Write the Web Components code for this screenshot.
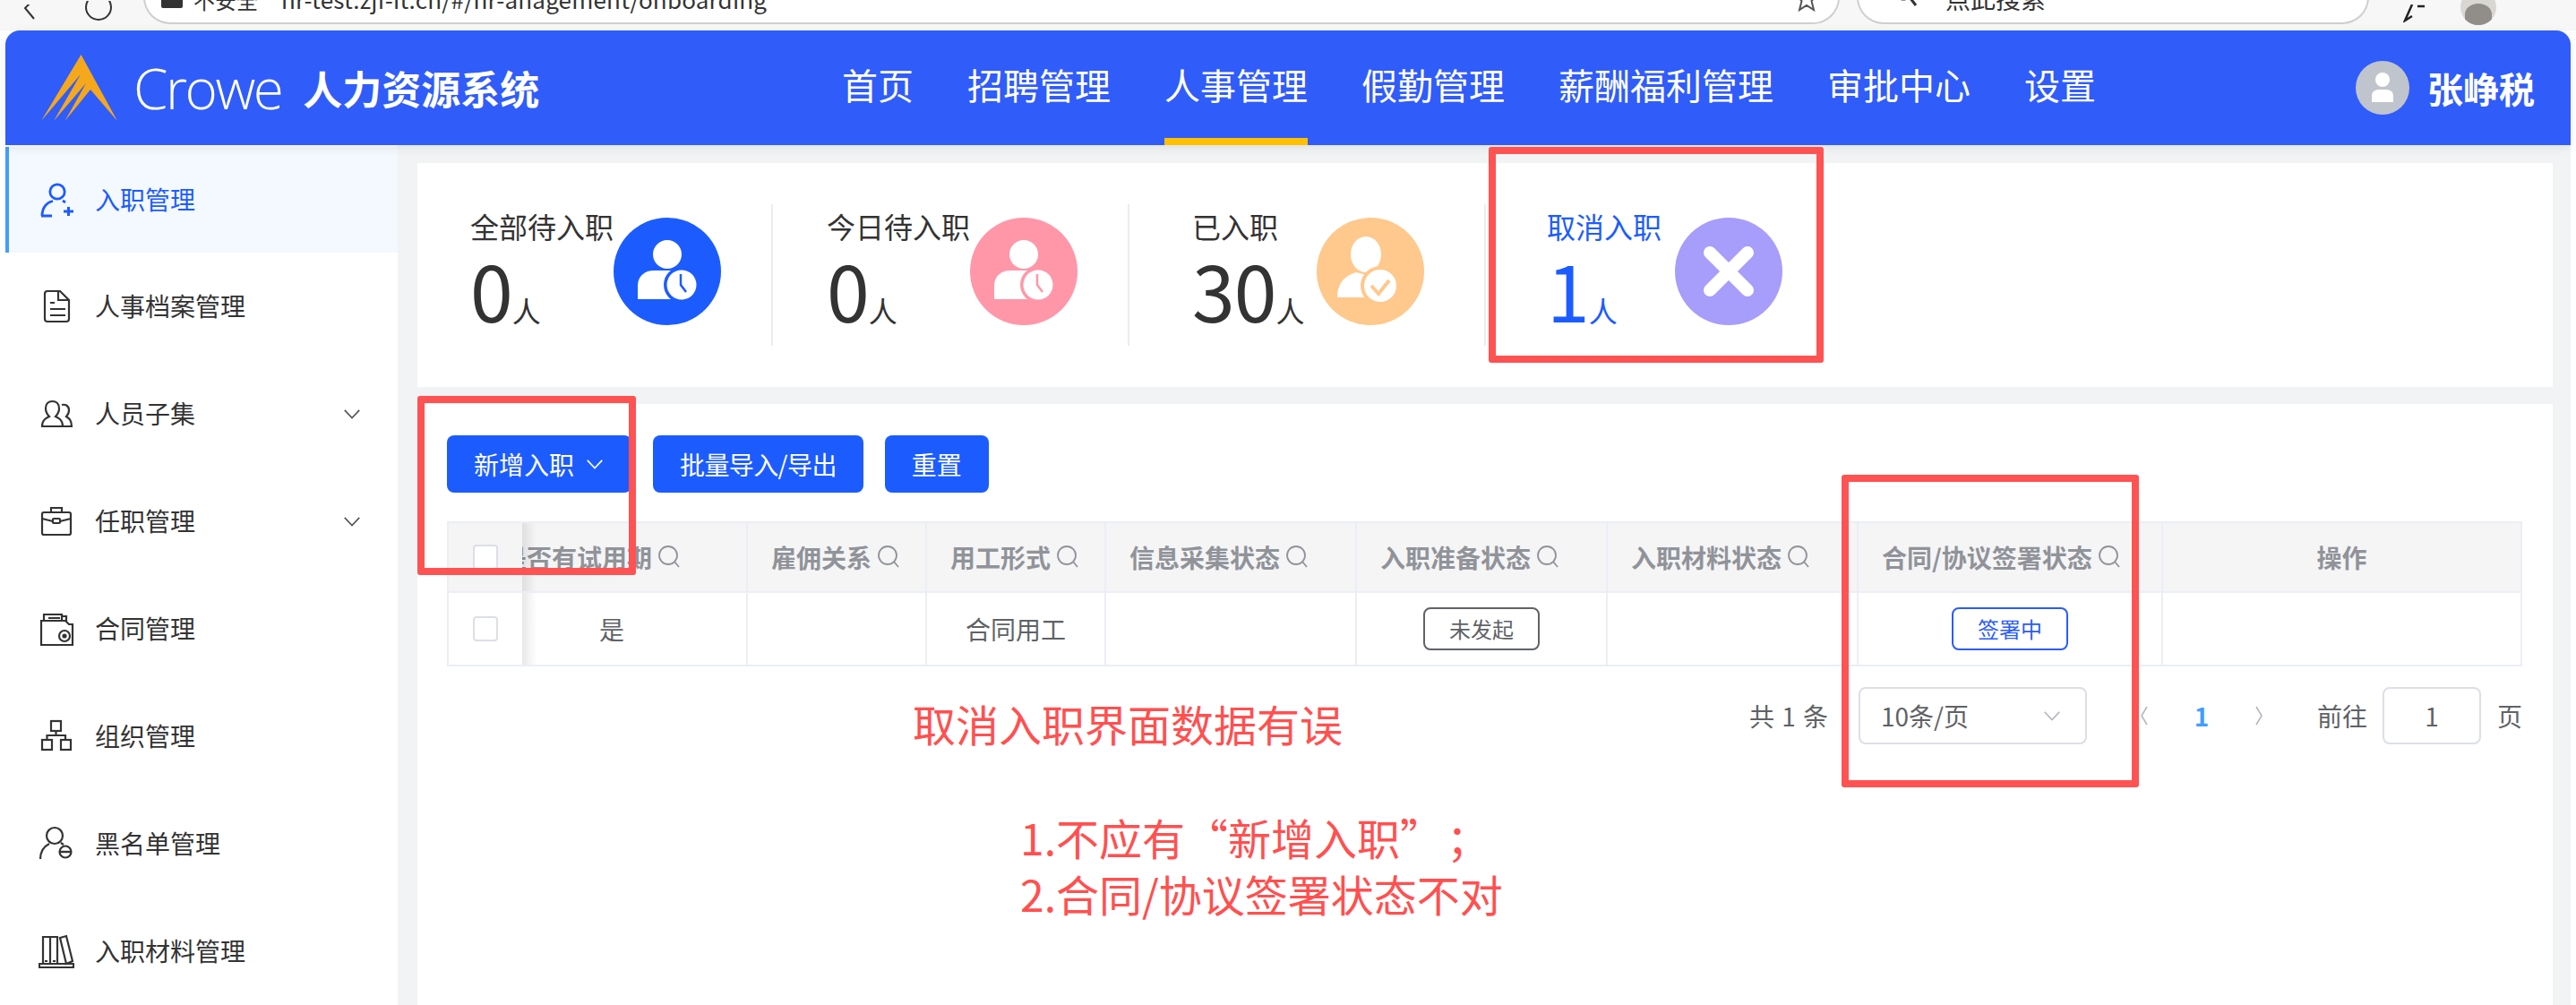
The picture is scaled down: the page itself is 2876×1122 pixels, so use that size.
<!DOCTYPE html>
<html lang="zh-CN">
<head>
<meta charset="utf-8">
<title>人力资源系统</title>
<style>
    html, body { margin: 0; padding: 0; background: #fff; }
    body { width: 2876px; height: 1122px; overflow: hidden; position: relative; font-family: "Noto Sans CJK SC", "Noto Sans", sans-serif; }
    .app-body { display: flex; height: 960px; margin: 0 6px; }
</style>
</head>
<body>
<browser-bar></browser-bar>
<app-header></app-header>
<div class="app-body">
    <side-menu></side-menu>
    <main-area></main-area>
</div>

<!-- 赤枠と赤字の注釈 -->
<red-box style="left:1662px;top:164px;width:374px;height:241px"></red-box>
<red-box style="left:466px;top:442px;width:244px;height:200px"></red-box>
<red-box style="left:2056px;top:530px;width:332px;height:349px"></red-box>
<red-note style="left:1019px;top:776px">取消入职界面数据有误</red-note>
<red-note style="left:1139px;top:903px">1.不应有“新增入职<span style="letter-spacing:28px">”</span>；<br>2.合同/协议签署状态不对</red-note>

<script>
const FONT = '"Noto Sans CJK SC", "Noto Sans", sans-serif';

const chevron = (size, color) => `<svg width="${size}" height="${size}" viewBox="0 0 24 24" fill="none" stroke="${color}" stroke-width="1.8"><path d="M3 7.5 12 17l9-9.5"/></svg>`;

// サイドメニューのアイコン (40x40)
const MENU_ICONS = {
    add: `<circle cx="21" cy="11" r="8.2"/><path d="M4 38c0-9 5-15 12-16.500M15 38H3M27 21l3 2" /><path d="M28 33h11M33.500 28v10" stroke-width="3"/>`,
    doc: `<path d="M12 4h14l10 10v21a3 3 0 0 1-3 3H12a3 3 0 0 1-3-3V7a3 3 0 0 1 3-3Z" transform="translate(-2 -1)"/><path d="M24 3v11h11M15 17h5M15 24h17M15 31h17" transform="translate(-2 -1)"/>`,
    group: `<path d="M4 34c0-7 4-9 8-11-3-3-4-6-4-9 0-5 3-8 7.500-8s7.500 3 7.500 8c0 3-1 6-4 9 4 2 8 4 8 11ZM26 10c4-1 8 1 8 6 0 3-1 5-3 7 3 2 6 4 6 11h-9"/>`,
    bag: `<rect x="4" y="10" width="32" height="25" rx="2"/><path d="M14 10V5h12v5M4 17l12 3M36 17l-12 3"/><rect x="16" y="17" width="8" height="5" rx="1"/>`,
    folder: `<path d="M3 11h27l4 4h4v23H3ZM6 11V4h20v7M11 8h13M27 6h4v6"/><circle cx="29" cy="28" r="6"/><circle cx="29" cy="28" r="1.500" fill="currentColor"/>`,
    org: `<rect x="14" y="3" width="11" height="11"/><rect x="4" y="24" width="11" height="11"/><rect x="25" y="24" width="11" height="11"/><path d="M19.500 14v5M9.500 24v-5h20.500v5"/>`,
    ban: `<circle cx="18" cy="11" r="9"/><path d="M2 37c0-9 4-14 10-17M25 19l3 2"/><circle cx="30" cy="29" r="6.500"/><path d="M23.500 29h13" stroke-width="2.400"/>`,
    books: `<path d="M6 4h8v30H6ZM14 4h8v30h-8ZM25 5l7-2 7 28-7 3Z" transform="translate(-1 0)"/><path d="M1 34h38v4H1ZM7 31h3M16 31h3"/>`
};

class BrowserBar extends HTMLElement {
    constructor() {
        super();
        this.attachShadow({ mode: 'open' });
        this.shadowRoot.innerHTML = `
            <style>
                :host { display: flex; align-items: flex-end; height: 34px; background: #f7f7f7; overflow: hidden; padding: 0 0 7px 26px; box-sizing: border-box; color: #333; font: 26px ${FONT}; }
                svg { flex: none; }
                .nav { display: flex; align-items: flex-end; gap: 55px; width: 134px; margin-bottom: 2px; flex: none; }
                .pill { height: 50px; box-sizing: border-box; background: #fff; border: 2px solid #cfcfcf; border-top: 0; border-radius: 0 0 30px 30px; display: flex; align-items: flex-end; white-space: nowrap; flex: none; }
                .addr { width: 1894px; padding: 0 0 13px 18px; }
                .lock { width: 24px; height: 12px; background: #333; border-radius: 2px; margin-bottom: 3px; }
                .warn { font-size: 24px; line-height: 24px; margin: 0 26px 0 12px; }
                .url { line-height: 26px; letter-spacing: .2px; }
                .star { margin-left: auto; margin-right: 22px; margin-bottom: -2px; }
                .search { width: 572px; margin-left: 19px; padding: 0 0 13px 42px; font-size: 28px; }
                .search svg { margin-right: 31px; margin-bottom: 0; }
                .search span { line-height: 28px; }
                .ext { margin-left: 38px; margin-bottom: 2px; }
                .me { width: 40px; height: 40px; border-radius: 50%; background: #d9d7d3; margin: 0 0 -1px 38px; overflow: hidden; display: flex; justify-content: center; align-items: flex-end; flex: none; }
                .me i { display: block; width: 30px; height: 24px; border-radius: 50% 50% 0 0; background: #918d88; }
            </style>
            <div class="nav">
                <svg width="14" height="20" viewBox="0 0 14 20" fill="none" stroke="#333" stroke-width="2"><path d="M12 -6 2 4l10 12"/></svg>
                <svg width="30" height="24" viewBox="0 0 30 24" fill="none" stroke="#333" stroke-width="2"><circle cx="15" cy="7" r="14"/></svg>
            </div>
            <div class="pill addr">
                <span class="lock"></span><span class="warn">不安全</span>
                <span class="url">hr-test.zjf-it.cn/#/hr-anagement/onboarding</span>
                <svg class="star" width="26" height="26" viewBox="0 0 26 26" fill="none" stroke="#555" stroke-width="2"><path d="M13 -4 17 6h8l-6.500 7 2.500 10-8-5-8 5 2.500-10L1 6h8Z"/></svg>
            </div>
            <div class="pill search">
                <svg width="24" height="24" viewBox="0 0 24 24" fill="none" stroke="#333" stroke-width="3"><circle cx="8" cy="2" r="9"/><path d="m15 9 7 9"/></svg>
                <span>点此搜索</span>
            </div>
            <svg class="ext" width="26" height="20" viewBox="0 0 26 20" fill="none" stroke="#222" stroke-width="2.500"><path d="M10 0 2 18l8-5M16 2h8"/></svg>
            <div class="me"><i></i></div>
        `;
    }
}

class AppHeader extends HTMLElement {
    constructor() {
        super();
        this.attachShadow({ mode: 'open' });
        const items = ['首页', '招聘管理', '人事管理', '假勤管理', '薪酬福利管理', '审批中心', '设置'];
        this.shadowRoot.innerHTML = `
            <style>
                :host { display: flex; position: relative; z-index: 1; height: 128px; margin: 0 6px; background: #305cfa; border-radius: 16px 16px 0 0; color: #fff; font-family: ${FONT}; box-shadow: 0 3px 12px rgba(0, 0, 0, .08); }
                .brand { width: 934px; flex: none; display: flex; align-items: center; padding-left: 40px; box-sizing: border-box; }
                .crowe { font: 300 62px/1 "Open Sans", sans-serif; letter-spacing: -2.5px; margin-left: 18px; }
                .title { font-size: 44px; line-height: 1; font-weight: 700; margin-left: 24px; letter-spacing: 0; }
                nav { display: flex; gap: 60px; }
                nav a { font-size: 40px; line-height: 120px; height: 120px; border-bottom: 8px solid transparent; white-space: nowrap; }
                nav a.active { border-bottom-color: #ffc000; }
                .user { margin-left: auto; padding-right: 40px; display: flex; align-items: center; gap: 20px; font-size: 40px; font-weight: 700; }
                .avatar { width: 60px; height: 60px; border-radius: 50%; background: #c0c4cc; display: flex; align-items: center; justify-content: center; }
            </style>
            <div class="brand">
                <svg width="85" height="74" viewBox="46 61 85 74"><path fill="#f5a81c" d="M90.500 61 131 135 101 100 72.500 135 96 93 60 135 90 83 46 135Z"/></svg>
                <span class="crowe">Crowe</span>
                <span class="title">人力资源系统</span>
            </div>
            <nav>${items.map(t => `<a class="${t === '人事管理' ? 'active' : ''}">${t}</a>`).join('')}</nav>
            <div class="user">
                <span class="avatar"><svg width="30" height="34" viewBox="0 0 30 34" fill="#fff"><ellipse cx="15" cy="8" rx="8" ry="8"/><path d="M3 33V26c0-5 4-7 8-7h8c4 0 8 2 8 7v7Z"/></svg></span>
                <span>张峥税</span>
            </div>
        `;
    }
}

class MenuItem extends HTMLElement {
    constructor() {
        super();
        this.attachShadow({ mode: 'open' });
    }
    connectedCallback() {
        const active = this.hasAttribute('active');
        const arrow = this.hasAttribute('arrow');
        this.shadowRoot.innerHTML = `
            <style>
                :host { display: flex; align-items: center; height: 120px; padding-left: 37px; box-sizing: border-box; color: #333; font: 28px/1 ${FONT}; }
                :host([active]) { height: 118px; margin-top: 2px; background: #f4f8ff; color: #1c5cff; border-left: 4px solid #409eff; padding-left: 33px; }
                svg.icon { flex: none; width: 40px; height: 40px; fill: none; stroke: currentColor; stroke-width: 2.200; margin-right: 23px; }
                :host([active]) svg.icon { stroke-width: 2.800; }
                .label { padding-bottom: 3px; }
                .arrow { margin-left: auto; margin-right: 40px; display: flex; }
            </style>
            <svg class="icon" viewBox="0 0 40 40">${MENU_ICONS[this.getAttribute('icon')]}</svg>
            <span class="label"><slot></slot></span>
            ${arrow ? `<span class="arrow">${chevron(22, '#555')}</span>` : ''}
        `;
    }
}

class SideMenu extends HTMLElement {
    constructor() {
        super();
        this.attachShadow({ mode: 'open' });
        this.shadowRoot.innerHTML = `
            <style>
                :host { display: block; flex: none; width: 438px; background: #fff; overflow: hidden; }
            </style>
            <menu-item icon="add" active>入职管理</menu-item>
            <menu-item icon="doc">人事档案管理</menu-item>
            <menu-item icon="group" arrow>人员子集</menu-item>
            <menu-item icon="bag" arrow>任职管理</menu-item>
            <menu-item icon="folder">合同管理</menu-item>
            <menu-item icon="org">组织管理</menu-item>
            <menu-item icon="ban">黑名单管理</menu-item>
            <menu-item icon="books">入职材料管理</menu-item>
        `;
    }
}

// 統計カードの丸アイコン
const personBody = (badge) => `
    <ellipse cx="60" cy="41" rx="16" ry="16" fill="#fff"/>
    <path d="M27 91V76c0-11 8-17 18-17h22c8 0 12 8 12 32Z" fill="#fff"/>
    ${badge}`;
const clockBadge = (c) => `<circle cx="76" cy="75" r="20" fill="${c}"/><circle cx="76" cy="75" r="16.500" fill="#fff"/><path d="M75 63v12l6 8" fill="none" stroke="${c}" stroke-width="2.500"/>`;
const STAT_ICONS = {
    blue: personBody(clockBadge('#1c5cff')),
    pink: personBody(clockBadge('#ff97a9')),
    orange: `<ellipse cx="55" cy="41" rx="17" ry="20" fill="#fff"/><path d="M23 89c0-16 8-24 21-28l16 4-4 24Z" fill="#fff"/><circle cx="71" cy="76" r="22" fill="#ffc88c"/><circle cx="71" cy="76" r="18" fill="#fff"/><path d="m61 76 8 9 12-15" fill="none" stroke="#ffc88c" stroke-width="4"/>`,
    purple: `<path d="M39 39 81 81M81 39 39 81" stroke="#fff" stroke-width="14" stroke-linecap="round"/>`
};
const STAT_COLORS = { blue: '#1c5cff', pink: '#ff97a9', orange: '#ffc88c', purple: '#a79dfb' };

class StatCard extends HTMLElement {
    constructor() {
        super();
        this.attachShadow({ mode: 'open' });
    }
    connectedCallback() {
        const kind = this.getAttribute('kind');
        this.shadowRoot.innerHTML = `
            <style>
                :host { display: flex; align-items: flex-start; height: 158px; box-sizing: border-box; color: #333; font-family: ${FONT}; }
                :host([current]) { color: #1c5cff; }
                :host([line]) { border-right: 2px solid #ececec; }
                .label { font-size: 32px; line-height: 48px; white-space: nowrap; }
                .num { display: flex; align-items: baseline; line-height: 94px; font-size: 86px; white-space: nowrap; letter-spacing: -1px; height: 94px; }
                .num small { font-size: 32px; letter-spacing: 0; }
                .text { display: flex; flex-direction: column; }
                svg { flex: none; margin-top: 15px; margin-left: var(--icon-gap, 0); }
            </style>
            <div class="text">
                <div class="label"><slot></slot></div>
                <div class="num">${this.getAttribute('count')}<small>人</small></div>
            </div>
            <svg width="120" height="120" viewBox="0 0 120 120"><circle cx="60" cy="60" r="60" fill="${STAT_COLORS[kind]}"/>${STAT_ICONS[kind]}</svg>
        `;
    }
}

class StatRow extends HTMLElement {
    constructor() {
        super();
        this.attachShadow({ mode: 'open' });
        this.shadowRoot.innerHTML = `
            <style>
                :host { display: flex; height: 250px; box-sizing: border-box; padding: 46px 0 0 59px; background: #fff; }
                stat-card:nth-of-type(1) { width: 338px; }
                stat-card:nth-of-type(2) { width: 338px; margin-left: 60px; }
                stat-card:nth-of-type(3) { width: 328px; margin-left: 70px; --icon-gap: 14px; }
                stat-card:nth-of-type(4) { margin-left: 68px; --icon-gap: 15px; }
            </style>
            <stat-card kind="blue" count="0" line>全部待入职</stat-card>
            <stat-card kind="pink" count="0" line>今日待入职</stat-card>
            <stat-card kind="orange" count="30" line>已入职</stat-card>
            <stat-card kind="purple" count="1" current>取消入职</stat-card>
        `;
    }
}

class BlueButton extends HTMLElement {
    constructor() {
        super();
        this.attachShadow({ mode: 'open' });
        this.shadowRoot.innerHTML = `
            <style>
                :host { display: inline-flex; align-items: center; gap: 12px; height: 64px; padding: 0 30px; box-sizing: border-box; background: #1c5cff; color: #fff; border-radius: 8px; font: 28px/1 ${FONT}; white-space: nowrap; }
            </style>
            <slot></slot>${this.hasAttribute('arrow') ? chevron(22, '#fff') : ''}
        `;
    }
}

const searchIcon = `<svg width="24" height="26" viewBox="0 0 24 26" fill="none" stroke="#909399" stroke-width="1.800"><circle cx="11" cy="11" r="10"/><path d="m18 18 5 6"/></svg>`;

class DataTable extends HTMLElement {
    constructor() {
        super();
        this.attachShadow({ mode: 'open' });
        const head = ['雇佣关系', '用工形式', '信息采集状态', '入职准备状态', '入职材料状态', '合同/协议签署状态'];
        this.shadowRoot.innerHTML = `
            <style>
                :host { display: grid; grid-template-columns: 82px 252px 200px 200px 280px 280px 280px 340px 399px; grid-template-rows: 78px 80px; border: 2px solid #ebeef5; font: 28px/1 ${FONT}; color: #606266; }
                .cell { display: flex; align-items: center; justify-content: center; border-right: 2px solid #ebeef5; box-sizing: border-box; min-width: 0; overflow: hidden; white-space: nowrap; }
                .cell:nth-of-type(9), .cell:nth-of-type(18) { border-right: 0; }
                .th { background: #f5f5f6; color: #909399; font-weight: 700; border-bottom: 2px solid #ebeef5; justify-content: flex-start; padding-left: 26px; gap: 7px; }
                .th svg { flex: none; }
                .th.first { padding-left: 0; }
                .th.first span { margin-left: -23px; flex: none; }
                .th.op { justify-content: center; padding-left: 0; }
                .fixed { position: relative; overflow: visible; border-right: 0; z-index: 1; justify-content: flex-start; padding-left: 27px; }
                .fixed::after { content: ""; position: absolute; top: 0; bottom: 0; left: 100%; width: 16px; background: linear-gradient(to right, rgba(0, 0, 0, .09), rgba(0, 0, 0, 0)); pointer-events: none; }
                .fixed i { display: block; width: 28px; height: 28px; box-sizing: border-box; background: #fff; border: 2px solid #dcdfe6; border-radius: 4px; }
                .yes { padding-right: 50px; }
            </style>
            <div class="cell th fixed"><i></i></div>
            <div class="cell th first"><span>是否有试用期</span>${searchIcon}</div>
            ${head.map(t => `<div class="cell th"><span>${t}</span>${searchIcon}</div>`).join('')}
            <div class="cell th op">操作</div>
            <div class="cell fixed"><i></i></div>
            <div class="cell yes">是</div>
            <div class="cell"></div>
            <div class="cell">合同用工</div>
            <div class="cell"></div>
            <div class="cell"><status-tag>未发起</status-tag></div>
            <div class="cell"></div>
            <div class="cell"><status-tag blue>签署中</status-tag></div>
            <div class="cell"></div>
        `;
    }
}

class StatusTag extends HTMLElement {
    constructor() {
        super();
        this.attachShadow({ mode: 'open' });
        this.shadowRoot.innerHTML = `
            <style>
                :host { display: inline-flex; align-items: center; justify-content: center; width: 130px; height: 48px; box-sizing: border-box; border: 2px solid #606266; border-radius: 8px; color: #606266; font: 24px/1 ${FONT}; }
                :host([blue]) { border-color: #2b5cf6; color: #2b5cf6; }
            </style>
            <slot></slot>
        `;
    }
}

class PagerBar extends HTMLElement {
    constructor() {
        super();
        this.attachShadow({ mode: 'open' });
        this.shadowRoot.innerHTML = `
            <style>
                :host { display: flex; justify-content: flex-end; align-items: center; height: 64px; margin-top: 23px; color: #606266; font: 28px/1 ${FONT}; white-space: nowrap; }
                .total { word-spacing: 2px; }
                .select, .jump { height: 64px; box-sizing: border-box; border: 2px solid #dcdfe6; border-radius: 8px; display: flex; align-items: center; background: #fff; }
                .select { width: 255px; padding: 0 26px 0 23px; justify-content: space-between; margin-left: 34px; }
                .jump { width: 110px; justify-content: center; margin: 0 18px 0 17px; }
                .pg { width: 64px; display: flex; justify-content: center; }
                .pg.on { color: #409eff; font-weight: 700; }
                .pages { display: flex; margin: 0 33px 0 32px; }
            </style>
            <span class="total">共 1 条</span>
            <div class="select"><span>10条/页</span>${chevron(22, '#b4b8bf')}</div>
            <div class="pages">
                <span class="pg"><svg width="10" height="28" viewBox="0 0 10 28" fill="none" stroke="#b4b8bf" stroke-width="1.600"><path d="M8 4 2 14l6 10"/></svg></span>
                <span class="pg on">1</span>
                <span class="pg"><svg width="10" height="28" viewBox="0 0 10 28" fill="none" stroke="#b4b8bf" stroke-width="1.600"><path d="m2 4 6 10-6 10"/></svg></span>
            </div>
            <span>前往</span>
            <div class="jump">1</div>
            <span>页</span>
        `;
    }
}

class MainArea extends HTMLElement {
    constructor() {
        super();
        this.attachShadow({ mode: 'open' });
        this.shadowRoot.innerHTML = `
            <style>
                :host { display: flex; flex-direction: column; flex: 1; min-width: 0; gap: 19px; padding: 20px 20px 0 22px; background: #f2f3f5; box-sizing: border-box; }
                .list { flex: 1; background: #fff; padding: 35px 34px 0 33px; box-sizing: border-box; }
                .tools { display: flex; gap: 24px; margin-bottom: 32px; }
                .tight { letter-spacing: -.6px; }
            </style>
            <stat-row></stat-row>
            <section class="list">
                <div class="tools">
                    <blue-button arrow>新增入职</blue-button>
                    <blue-button class="tight">批量导入/导出</blue-button>
                    <blue-button>重置</blue-button>
                </div>
                <data-table></data-table>
                <pager-bar></pager-bar>
            </section>
        `;
    }
}

class RedBox extends HTMLElement {
    constructor() {
        super();
        this.attachShadow({ mode: 'open' });
        this.shadowRoot.innerHTML = `
            <style>
                :host { display: block; position: absolute; z-index: 5; box-sizing: border-box; border: 8px solid #ff5252; border-radius: 3px; }
            </style>
        `;
    }
}

class RedNote extends HTMLElement {
    constructor() {
        super();
        this.attachShadow({ mode: 'open' });
        this.shadowRoot.innerHTML = `
            <style>
                :host { display: block; position: absolute; z-index: 5; color: #ff5050; font: 48px/63px ${FONT}; white-space: nowrap; }
            </style>
            <slot></slot>
        `;
    }
}

customElements.define('status-tag', StatusTag);
customElements.define('menu-item', MenuItem);
customElements.define('stat-card', StatCard);
customElements.define('stat-row', StatRow);
customElements.define('blue-button', BlueButton);
customElements.define('data-table', DataTable);
customElements.define('pager-bar', PagerBar);
customElements.define('browser-bar', BrowserBar);
customElements.define('app-header', AppHeader);
customElements.define('side-menu', SideMenu);
customElements.define('main-area', MainArea);
customElements.define('red-box', RedBox);
customElements.define('red-note', RedNote);
</script>
</body>
</html>
